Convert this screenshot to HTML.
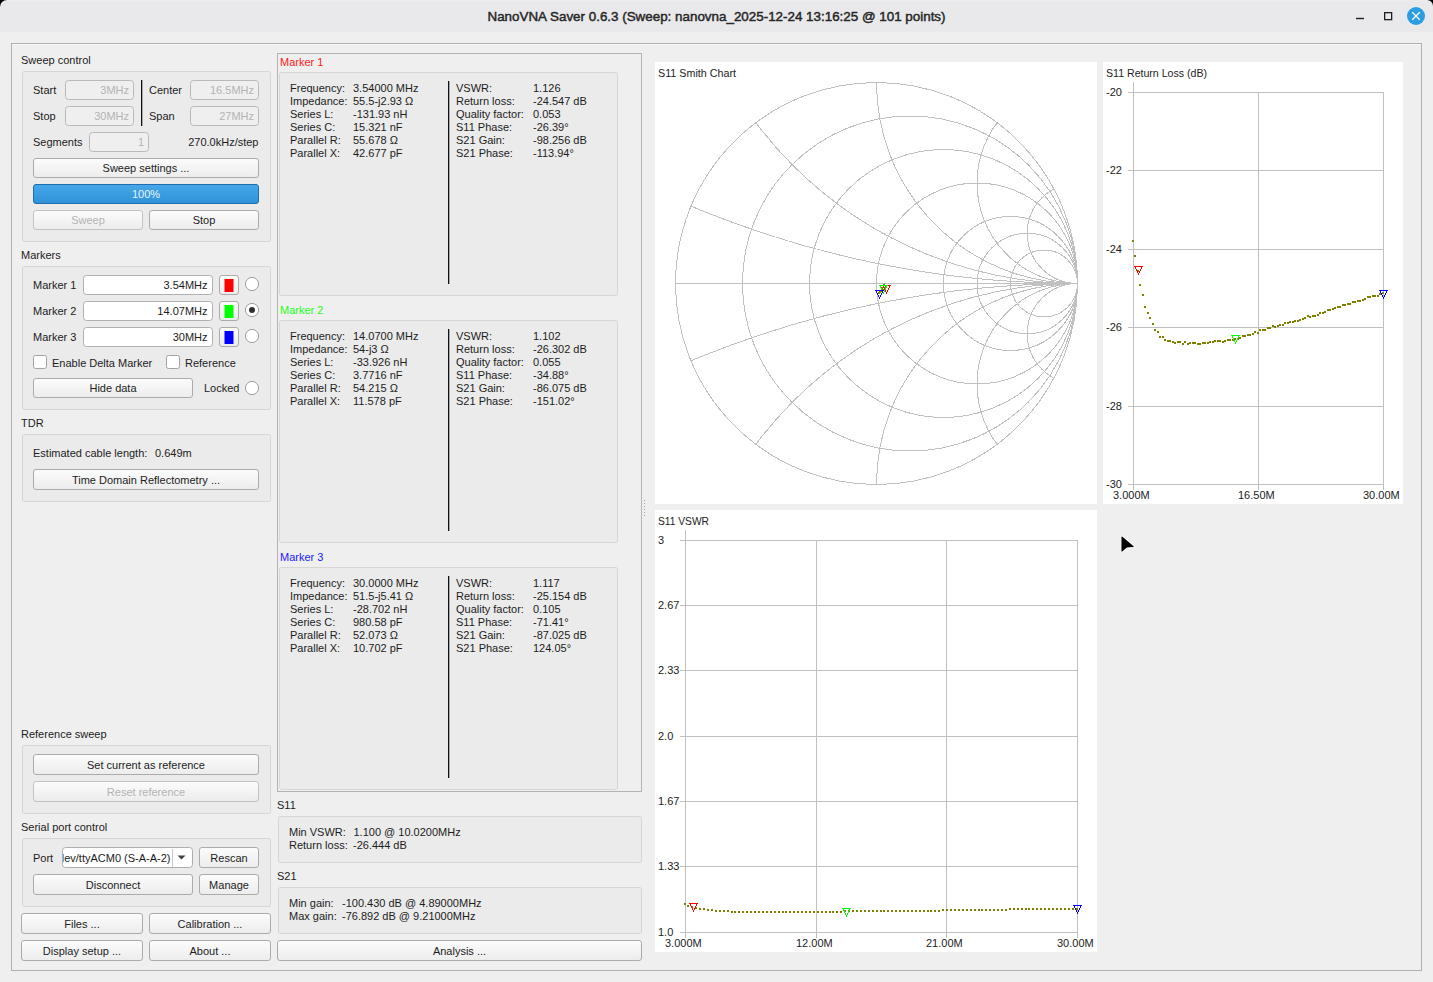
<!DOCTYPE html>
<html><head><meta charset="utf-8"><style>
html,body{margin:0;padding:0;background:#efefef;overflow:hidden;width:1433px;height:982px}
svg{display:block}
text{font-family:"Liberation Sans", sans-serif;white-space:pre}
</style></head><body>
<svg width="1433" height="982" viewBox="0 0 1433 982">
<defs>
<linearGradient id="btn" x1="0" y1="0" x2="0" y2="1"><stop offset="0" stop-color="#fcfcfc"/><stop offset="1" stop-color="#ececec"/></linearGradient>
<linearGradient id="prog" x1="0" y1="0" x2="0" y2="1"><stop offset="0" stop-color="#46a8ea"/><stop offset="1" stop-color="#2f92d8"/></linearGradient>
<clipPath id="smclip"><circle cx="876" cy="283" r="201"/></clipPath>
<clipPath id="cmbclip"><rect x="63" y="849" width="109" height="18"/></clipPath>
</defs>
<rect x="0" y="0" width="1433" height="982" rx="0" fill="#efefef" stroke="none" stroke-width="1"/>
<rect x="0" y="0" width="1433" height="32" rx="0" fill="#e9e9eb" stroke="none" stroke-width="1"/>
<path d="M0,0 L7,0 A7,7 0 0 0 0,7 Z" fill="#000"/>
<path d="M1433,0 L1427,0 A6,6 0 0 1 1433,6 Z" fill="#000"/>
<rect x="7" y="0" width="1420" height="1" rx="0" fill="#ededed" stroke="none" stroke-width="1"/>
<text x="716.5" y="21" font-size="13.4" fill="#262626" text-anchor="middle" font-weight="normal" stroke="#262626" stroke-width="0.45">NanoVNA Saver 0.6.3 (Sweep: nanovna_2025-12-24 13:16:25 @ 101 points)</text>
<rect x="1356" y="17.8" width="8" height="1.4" rx="0" fill="#1e1e1e" stroke="none" stroke-width="1"/>
<rect x="1384.65" y="12.65" width="7" height="7" rx="0" fill="none" stroke="#1e1e1e" stroke-width="1.3"/>
<circle cx="1416" cy="16" r="9" fill="#2a9ee0"/>
<path d="M1412.3,12.3 L1419.7,19.7 M1419.7,12.3 L1412.3,19.7" stroke="#fff" stroke-width="1.3"/>
<rect x="11.5" y="43.5" width="1410" height="927" rx="0" fill="none" stroke="#b0b0b0" stroke-width="1"/>
<line x1="12" y1="44.5" x2="1421" y2="44.5" stroke="#f7f7f7" stroke-width="1"/>
<text x="21" y="64" font-size="11" fill="#1c1c1c" text-anchor="start" font-weight="normal">Sweep control</text>
<rect x="22.5" y="71.5" width="248" height="170" rx="2" fill="#ebebeb" stroke="#d6d6d6" stroke-width="1"/>
<text x="33" y="94" font-size="11" fill="#1c1c1c" text-anchor="start" font-weight="normal">Start</text>
<rect x="65.5" y="80.5" width="68" height="19" rx="3" fill="#efefef" stroke="#b9b9b9" stroke-width="1"/>
<text x="129" y="94.0" font-size="11" fill="#b3b3b3" text-anchor="end" font-weight="normal">3MHz</text>
<text x="33" y="120" font-size="11" fill="#1c1c1c" text-anchor="start" font-weight="normal">Stop</text>
<rect x="65.5" y="106.5" width="68" height="19" rx="3" fill="#efefef" stroke="#b9b9b9" stroke-width="1"/>
<text x="129" y="120.0" font-size="11" fill="#b3b3b3" text-anchor="end" font-weight="normal">30MHz</text>
<rect x="141" y="80" width="1.3" height="46" rx="0" fill="#111" stroke="none" stroke-width="1"/>
<text x="149" y="94" font-size="11" fill="#1c1c1c" text-anchor="start" font-weight="normal">Center</text>
<rect x="190.5" y="80.5" width="68" height="19" rx="3" fill="#efefef" stroke="#b9b9b9" stroke-width="1"/>
<text x="254" y="94.0" font-size="11" fill="#b3b3b3" text-anchor="end" font-weight="normal">16.5MHz</text>
<text x="149" y="120" font-size="11" fill="#1c1c1c" text-anchor="start" font-weight="normal">Span</text>
<rect x="190.5" y="106.5" width="68" height="19" rx="3" fill="#efefef" stroke="#b9b9b9" stroke-width="1"/>
<text x="254" y="120.0" font-size="11" fill="#b3b3b3" text-anchor="end" font-weight="normal">27MHz</text>
<text x="33" y="146" font-size="11" fill="#1c1c1c" text-anchor="start" font-weight="normal">Segments</text>
<rect x="89.5" y="132.5" width="59" height="19" rx="3" fill="#efefef" stroke="#b9b9b9" stroke-width="1"/>
<text x="144" y="146.0" font-size="11" fill="#b3b3b3" text-anchor="end" font-weight="normal">1</text>
<text x="258.5" y="146" font-size="11" fill="#1c1c1c" text-anchor="end" font-weight="normal">270.0kHz/step</text>
<rect x="33.5" y="158.5" width="225" height="19" rx="2.5" fill="url(#btn)" stroke="#ababab" stroke-width="1"/>
<text x="146.0" y="172.0" font-size="11" fill="#1c1c1c" text-anchor="middle" font-weight="normal">Sweep settings ...</text>
<rect x="33.5" y="184.5" width="225" height="19" rx="2.5" fill="url(#prog)" stroke="#1f6fae" stroke-width="1"/>
<text x="146" y="198" font-size="11" fill="#e8f3fb" text-anchor="middle" font-weight="normal">100%</text>
<rect x="33.5" y="210.5" width="109" height="19" rx="2.5" fill="url(#btn)" stroke="#c2c2c2" stroke-width="1"/>
<text x="88.0" y="224.0" font-size="11" fill="#b3b3b3" text-anchor="middle" font-weight="normal">Sweep</text>
<rect x="149.5" y="210.5" width="109" height="19" rx="2.5" fill="url(#btn)" stroke="#ababab" stroke-width="1"/>
<text x="204.0" y="224.0" font-size="11" fill="#1c1c1c" text-anchor="middle" font-weight="normal">Stop</text>
<text x="21" y="259" font-size="11" fill="#1c1c1c" text-anchor="start" font-weight="normal">Markers</text>
<rect x="22.5" y="266.5" width="248" height="143" rx="2" fill="#ebebeb" stroke="#d6d6d6" stroke-width="1"/>
<text x="33" y="289" font-size="11" fill="#1c1c1c" text-anchor="start" font-weight="normal">Marker 1</text>
<rect x="83.5" y="275.5" width="129" height="19" rx="3" fill="#ffffff" stroke="#b0b0b0" stroke-width="1"/>
<text x="207.5" y="289.0" font-size="11" fill="#1c1c1c" text-anchor="end" font-weight="normal">3.54MHz</text>
<rect x="219.5" y="275.5" width="19" height="19" rx="2.5" fill="url(#btn)" stroke="#ababab" stroke-width="1"/>
<text x="229.0" y="289.0" font-size="11" fill="#1c1c1c" text-anchor="middle" font-weight="normal"></text>
<rect x="224.5" y="279" width="9" height="13" rx="0" fill="#ff0000" stroke="none" stroke-width="1"/>
<circle cx="252" cy="284" r="6.6" fill="#ffffff" stroke="#9f9f9f" stroke-width="1"/>
<text x="33" y="315" font-size="11" fill="#1c1c1c" text-anchor="start" font-weight="normal">Marker 2</text>
<rect x="83.5" y="301.5" width="129" height="19" rx="3" fill="#ffffff" stroke="#b0b0b0" stroke-width="1"/>
<text x="207.5" y="315.0" font-size="11" fill="#1c1c1c" text-anchor="end" font-weight="normal">14.07MHz</text>
<rect x="219.5" y="301.5" width="19" height="19" rx="2.5" fill="url(#btn)" stroke="#ababab" stroke-width="1"/>
<text x="229.0" y="315.0" font-size="11" fill="#1c1c1c" text-anchor="middle" font-weight="normal"></text>
<rect x="224.5" y="305" width="9" height="13" rx="0" fill="#00ff00" stroke="none" stroke-width="1"/>
<circle cx="252" cy="310" r="6.6" fill="#ffffff" stroke="#9f9f9f" stroke-width="1"/>
<circle cx="252" cy="310" r="3" fill="#303030"/>
<text x="33" y="341" font-size="11" fill="#1c1c1c" text-anchor="start" font-weight="normal">Marker 3</text>
<rect x="83.5" y="327.5" width="129" height="19" rx="3" fill="#ffffff" stroke="#b0b0b0" stroke-width="1"/>
<text x="207.5" y="341.0" font-size="11" fill="#1c1c1c" text-anchor="end" font-weight="normal">30MHz</text>
<rect x="219.5" y="327.5" width="19" height="19" rx="2.5" fill="url(#btn)" stroke="#ababab" stroke-width="1"/>
<text x="229.0" y="341.0" font-size="11" fill="#1c1c1c" text-anchor="middle" font-weight="normal"></text>
<rect x="224.5" y="331" width="9" height="13" rx="0" fill="#0000ff" stroke="none" stroke-width="1"/>
<circle cx="252" cy="336" r="6.6" fill="#ffffff" stroke="#9f9f9f" stroke-width="1"/>
<rect x="33.5" y="355.5" width="13" height="13" rx="2" fill="#ffffff" stroke="#a3a3a3" stroke-width="1"/>
<text x="52" y="367" font-size="11" fill="#1c1c1c" text-anchor="start" font-weight="normal">Enable Delta Marker</text>
<rect x="166.5" y="355.5" width="13" height="13" rx="2" fill="#ffffff" stroke="#a3a3a3" stroke-width="1"/>
<text x="185" y="367" font-size="11" fill="#1c1c1c" text-anchor="start" font-weight="normal">Reference</text>
<rect x="33.5" y="378.5" width="159" height="19" rx="2.5" fill="url(#btn)" stroke="#ababab" stroke-width="1"/>
<text x="113.0" y="392.0" font-size="11" fill="#1c1c1c" text-anchor="middle" font-weight="normal">Hide data</text>
<text x="204" y="392" font-size="11" fill="#1c1c1c" text-anchor="start" font-weight="normal">Locked</text>
<circle cx="252" cy="388" r="6.6" fill="#ffffff" stroke="#9f9f9f" stroke-width="1"/>
<text x="21" y="427" font-size="11" fill="#1c1c1c" text-anchor="start" font-weight="normal">TDR</text>
<rect x="22.5" y="434.5" width="248" height="67" rx="2" fill="#ebebeb" stroke="#d6d6d6" stroke-width="1"/>
<text x="33" y="457" font-size="11" fill="#1c1c1c" text-anchor="start" font-weight="normal">Estimated cable length:</text>
<text x="155" y="457" font-size="11" fill="#1c1c1c" text-anchor="start" font-weight="normal">0.649m</text>
<rect x="33.5" y="469.5" width="225" height="20" rx="2.5" fill="url(#btn)" stroke="#ababab" stroke-width="1"/>
<text x="146.0" y="483.5" font-size="11" fill="#1c1c1c" text-anchor="middle" font-weight="normal">Time Domain Reflectometry ...</text>
<text x="21" y="738" font-size="11" fill="#1c1c1c" text-anchor="start" font-weight="normal">Reference sweep</text>
<rect x="22.5" y="745.5" width="248" height="68" rx="2" fill="#ebebeb" stroke="#d6d6d6" stroke-width="1"/>
<rect x="33.5" y="754.5" width="225" height="20" rx="2.5" fill="url(#btn)" stroke="#ababab" stroke-width="1"/>
<text x="146.0" y="768.5" font-size="11" fill="#1c1c1c" text-anchor="middle" font-weight="normal">Set current as reference</text>
<rect x="33.5" y="781.5" width="225" height="20" rx="2.5" fill="url(#btn)" stroke="#c2c2c2" stroke-width="1"/>
<text x="146.0" y="795.5" font-size="11" fill="#b3b3b3" text-anchor="middle" font-weight="normal">Reset reference</text>
<text x="21" y="831" font-size="11" fill="#1c1c1c" text-anchor="start" font-weight="normal">Serial port control</text>
<rect x="22.5" y="838.5" width="248" height="68" rx="2" fill="#ebebeb" stroke="#d6d6d6" stroke-width="1"/>
<text x="33" y="862" font-size="11" fill="#1c1c1c" text-anchor="start" font-weight="normal">Port</text>
<rect x="62.5" y="847.5" width="130" height="20" rx="3" fill="#ffffff" stroke="#aeaeae" stroke-width="1"/>
<g clip-path="url(#cmbclip)">
<text x="55" y="862" font-size="11" fill="#1c1c1c" text-anchor="start" font-weight="normal">/dev/ttyACM0 (S-A-A-2)</text>
</g>
<line x1="172.5" y1="849" x2="172.5" y2="867" stroke="#c8c8c8" stroke-width="1"/>
<path d="M177.5,855.5 L185.5,855.5 L181.5,859.5 Z" fill="#404040"/>
<rect x="199.5" y="847.5" width="59" height="20" rx="2.5" fill="url(#btn)" stroke="#ababab" stroke-width="1"/>
<text x="229.0" y="861.5" font-size="11" fill="#1c1c1c" text-anchor="middle" font-weight="normal">Rescan</text>
<rect x="33.5" y="874.5" width="159" height="20" rx="2.5" fill="url(#btn)" stroke="#ababab" stroke-width="1"/>
<text x="113.0" y="888.5" font-size="11" fill="#1c1c1c" text-anchor="middle" font-weight="normal">Disconnect</text>
<rect x="199.5" y="874.5" width="59" height="20" rx="2.5" fill="url(#btn)" stroke="#ababab" stroke-width="1"/>
<text x="229.0" y="888.5" font-size="11" fill="#1c1c1c" text-anchor="middle" font-weight="normal">Manage</text>
<rect x="21.5" y="913.5" width="121" height="20" rx="2.5" fill="url(#btn)" stroke="#ababab" stroke-width="1"/>
<text x="82.0" y="927.5" font-size="11" fill="#1c1c1c" text-anchor="middle" font-weight="normal">Files ...</text>
<rect x="149.5" y="913.5" width="121" height="20" rx="2.5" fill="url(#btn)" stroke="#ababab" stroke-width="1"/>
<text x="210.0" y="927.5" font-size="11" fill="#1c1c1c" text-anchor="middle" font-weight="normal">Calibration ...</text>
<rect x="21.5" y="940.5" width="121" height="20" rx="2.5" fill="url(#btn)" stroke="#ababab" stroke-width="1"/>
<text x="82.0" y="954.5" font-size="11" fill="#1c1c1c" text-anchor="middle" font-weight="normal">Display setup ...</text>
<rect x="149.5" y="940.5" width="121" height="20" rx="2.5" fill="url(#btn)" stroke="#ababab" stroke-width="1"/>
<text x="210.0" y="954.5" font-size="11" fill="#1c1c1c" text-anchor="middle" font-weight="normal">About ...</text>
<rect x="277.5" y="53.5" width="364" height="738" rx="0" fill="none" stroke="#b3b3b3" stroke-width="1"/>
<text x="280" y="66" font-size="11" fill="#ff1a1a" text-anchor="start" font-weight="normal">Marker 1</text>
<rect x="279.5" y="72.5" width="338" height="223" rx="2" fill="#ebebeb" stroke="#d6d6d6" stroke-width="1"/>
<rect x="448" y="81" width="1.3" height="203" rx="0" fill="#111" stroke="none" stroke-width="1"/>
<text x="290" y="92" font-size="11" fill="#1c1c1c" text-anchor="start" font-weight="normal">Frequency:</text>
<text x="353" y="92" font-size="11" fill="#1c1c1c" text-anchor="start" font-weight="normal">3.54000 MHz</text>
<text x="456" y="92" font-size="11" fill="#1c1c1c" text-anchor="start" font-weight="normal">VSWR:</text>
<text x="533" y="92" font-size="11" fill="#1c1c1c" text-anchor="start" font-weight="normal">1.126</text>
<text x="290" y="105" font-size="11" fill="#1c1c1c" text-anchor="start" font-weight="normal">Impedance:</text>
<text x="353" y="105" font-size="11" fill="#1c1c1c" text-anchor="start" font-weight="normal">55.5-j2.93 Ω</text>
<text x="456" y="105" font-size="11" fill="#1c1c1c" text-anchor="start" font-weight="normal">Return loss:</text>
<text x="533" y="105" font-size="11" fill="#1c1c1c" text-anchor="start" font-weight="normal">-24.547 dB</text>
<text x="290" y="118" font-size="11" fill="#1c1c1c" text-anchor="start" font-weight="normal">Series L:</text>
<text x="353" y="118" font-size="11" fill="#1c1c1c" text-anchor="start" font-weight="normal">-131.93 nH</text>
<text x="456" y="118" font-size="11" fill="#1c1c1c" text-anchor="start" font-weight="normal">Quality factor:</text>
<text x="533" y="118" font-size="11" fill="#1c1c1c" text-anchor="start" font-weight="normal">0.053</text>
<text x="290" y="131" font-size="11" fill="#1c1c1c" text-anchor="start" font-weight="normal">Series C:</text>
<text x="353" y="131" font-size="11" fill="#1c1c1c" text-anchor="start" font-weight="normal">15.321 nF</text>
<text x="456" y="131" font-size="11" fill="#1c1c1c" text-anchor="start" font-weight="normal">S11 Phase:</text>
<text x="533" y="131" font-size="11" fill="#1c1c1c" text-anchor="start" font-weight="normal">-26.39°</text>
<text x="290" y="144" font-size="11" fill="#1c1c1c" text-anchor="start" font-weight="normal">Parallel R:</text>
<text x="353" y="144" font-size="11" fill="#1c1c1c" text-anchor="start" font-weight="normal">55.678 Ω</text>
<text x="456" y="144" font-size="11" fill="#1c1c1c" text-anchor="start" font-weight="normal">S21 Gain:</text>
<text x="533" y="144" font-size="11" fill="#1c1c1c" text-anchor="start" font-weight="normal">-98.256 dB</text>
<text x="290" y="157" font-size="11" fill="#1c1c1c" text-anchor="start" font-weight="normal">Parallel X:</text>
<text x="353" y="157" font-size="11" fill="#1c1c1c" text-anchor="start" font-weight="normal">42.677 pF</text>
<text x="456" y="157" font-size="11" fill="#1c1c1c" text-anchor="start" font-weight="normal">S21 Phase:</text>
<text x="533" y="157" font-size="11" fill="#1c1c1c" text-anchor="start" font-weight="normal">-113.94°</text>
<text x="280" y="314" font-size="11" fill="#1aff1a" text-anchor="start" font-weight="normal">Marker 2</text>
<rect x="279.5" y="320.5" width="338" height="222" rx="2" fill="#ebebeb" stroke="#d6d6d6" stroke-width="1"/>
<rect x="448" y="329" width="1.3" height="202" rx="0" fill="#111" stroke="none" stroke-width="1"/>
<text x="290" y="340" font-size="11" fill="#1c1c1c" text-anchor="start" font-weight="normal">Frequency:</text>
<text x="353" y="340" font-size="11" fill="#1c1c1c" text-anchor="start" font-weight="normal">14.0700 MHz</text>
<text x="456" y="340" font-size="11" fill="#1c1c1c" text-anchor="start" font-weight="normal">VSWR:</text>
<text x="533" y="340" font-size="11" fill="#1c1c1c" text-anchor="start" font-weight="normal">1.102</text>
<text x="290" y="353" font-size="11" fill="#1c1c1c" text-anchor="start" font-weight="normal">Impedance:</text>
<text x="353" y="353" font-size="11" fill="#1c1c1c" text-anchor="start" font-weight="normal">54-j3 Ω</text>
<text x="456" y="353" font-size="11" fill="#1c1c1c" text-anchor="start" font-weight="normal">Return loss:</text>
<text x="533" y="353" font-size="11" fill="#1c1c1c" text-anchor="start" font-weight="normal">-26.302 dB</text>
<text x="290" y="366" font-size="11" fill="#1c1c1c" text-anchor="start" font-weight="normal">Series L:</text>
<text x="353" y="366" font-size="11" fill="#1c1c1c" text-anchor="start" font-weight="normal">-33.926 nH</text>
<text x="456" y="366" font-size="11" fill="#1c1c1c" text-anchor="start" font-weight="normal">Quality factor:</text>
<text x="533" y="366" font-size="11" fill="#1c1c1c" text-anchor="start" font-weight="normal">0.055</text>
<text x="290" y="379" font-size="11" fill="#1c1c1c" text-anchor="start" font-weight="normal">Series C:</text>
<text x="353" y="379" font-size="11" fill="#1c1c1c" text-anchor="start" font-weight="normal">3.7716 nF</text>
<text x="456" y="379" font-size="11" fill="#1c1c1c" text-anchor="start" font-weight="normal">S11 Phase:</text>
<text x="533" y="379" font-size="11" fill="#1c1c1c" text-anchor="start" font-weight="normal">-34.88°</text>
<text x="290" y="392" font-size="11" fill="#1c1c1c" text-anchor="start" font-weight="normal">Parallel R:</text>
<text x="353" y="392" font-size="11" fill="#1c1c1c" text-anchor="start" font-weight="normal">54.215 Ω</text>
<text x="456" y="392" font-size="11" fill="#1c1c1c" text-anchor="start" font-weight="normal">S21 Gain:</text>
<text x="533" y="392" font-size="11" fill="#1c1c1c" text-anchor="start" font-weight="normal">-86.075 dB</text>
<text x="290" y="405" font-size="11" fill="#1c1c1c" text-anchor="start" font-weight="normal">Parallel X:</text>
<text x="353" y="405" font-size="11" fill="#1c1c1c" text-anchor="start" font-weight="normal">11.578 pF</text>
<text x="456" y="405" font-size="11" fill="#1c1c1c" text-anchor="start" font-weight="normal">S21 Phase:</text>
<text x="533" y="405" font-size="11" fill="#1c1c1c" text-anchor="start" font-weight="normal">-151.02°</text>
<text x="280" y="561" font-size="11" fill="#1a1aff" text-anchor="start" font-weight="normal">Marker 3</text>
<rect x="279.5" y="567.5" width="338" height="222" rx="2" fill="#ebebeb" stroke="#d6d6d6" stroke-width="1"/>
<rect x="448" y="576" width="1.3" height="202" rx="0" fill="#111" stroke="none" stroke-width="1"/>
<text x="290" y="587" font-size="11" fill="#1c1c1c" text-anchor="start" font-weight="normal">Frequency:</text>
<text x="353" y="587" font-size="11" fill="#1c1c1c" text-anchor="start" font-weight="normal">30.0000 MHz</text>
<text x="456" y="587" font-size="11" fill="#1c1c1c" text-anchor="start" font-weight="normal">VSWR:</text>
<text x="533" y="587" font-size="11" fill="#1c1c1c" text-anchor="start" font-weight="normal">1.117</text>
<text x="290" y="600" font-size="11" fill="#1c1c1c" text-anchor="start" font-weight="normal">Impedance:</text>
<text x="353" y="600" font-size="11" fill="#1c1c1c" text-anchor="start" font-weight="normal">51.5-j5.41 Ω</text>
<text x="456" y="600" font-size="11" fill="#1c1c1c" text-anchor="start" font-weight="normal">Return loss:</text>
<text x="533" y="600" font-size="11" fill="#1c1c1c" text-anchor="start" font-weight="normal">-25.154 dB</text>
<text x="290" y="613" font-size="11" fill="#1c1c1c" text-anchor="start" font-weight="normal">Series L:</text>
<text x="353" y="613" font-size="11" fill="#1c1c1c" text-anchor="start" font-weight="normal">-28.702 nH</text>
<text x="456" y="613" font-size="11" fill="#1c1c1c" text-anchor="start" font-weight="normal">Quality factor:</text>
<text x="533" y="613" font-size="11" fill="#1c1c1c" text-anchor="start" font-weight="normal">0.105</text>
<text x="290" y="626" font-size="11" fill="#1c1c1c" text-anchor="start" font-weight="normal">Series C:</text>
<text x="353" y="626" font-size="11" fill="#1c1c1c" text-anchor="start" font-weight="normal">980.58 pF</text>
<text x="456" y="626" font-size="11" fill="#1c1c1c" text-anchor="start" font-weight="normal">S11 Phase:</text>
<text x="533" y="626" font-size="11" fill="#1c1c1c" text-anchor="start" font-weight="normal">-71.41°</text>
<text x="290" y="639" font-size="11" fill="#1c1c1c" text-anchor="start" font-weight="normal">Parallel R:</text>
<text x="353" y="639" font-size="11" fill="#1c1c1c" text-anchor="start" font-weight="normal">52.073 Ω</text>
<text x="456" y="639" font-size="11" fill="#1c1c1c" text-anchor="start" font-weight="normal">S21 Gain:</text>
<text x="533" y="639" font-size="11" fill="#1c1c1c" text-anchor="start" font-weight="normal">-87.025 dB</text>
<text x="290" y="652" font-size="11" fill="#1c1c1c" text-anchor="start" font-weight="normal">Parallel X:</text>
<text x="353" y="652" font-size="11" fill="#1c1c1c" text-anchor="start" font-weight="normal">10.702 pF</text>
<text x="456" y="652" font-size="11" fill="#1c1c1c" text-anchor="start" font-weight="normal">S21 Phase:</text>
<text x="533" y="652" font-size="11" fill="#1c1c1c" text-anchor="start" font-weight="normal">124.05°</text>
<text x="277" y="809" font-size="11" fill="#1c1c1c" text-anchor="start" font-weight="normal">S11</text>
<rect x="278.5" y="816.5" width="363" height="46" rx="2" fill="#ebebeb" stroke="#d6d6d6" stroke-width="1"/>
<text x="289" y="836" font-size="11" fill="#1c1c1c" text-anchor="start" font-weight="normal">Min VSWR:</text>
<text x="353.5" y="836" font-size="11" fill="#1c1c1c" text-anchor="start" font-weight="normal">1.100 @ 10.0200MHz</text>
<text x="289" y="849" font-size="11" fill="#1c1c1c" text-anchor="start" font-weight="normal">Return loss:</text>
<text x="353" y="849" font-size="11" fill="#1c1c1c" text-anchor="start" font-weight="normal">-26.444 dB</text>
<text x="277" y="880" font-size="11" fill="#1c1c1c" text-anchor="start" font-weight="normal">S21</text>
<rect x="278.5" y="887.5" width="363" height="46" rx="2" fill="#ebebeb" stroke="#d6d6d6" stroke-width="1"/>
<text x="289" y="907" font-size="11" fill="#1c1c1c" text-anchor="start" font-weight="normal">Min gain:</text>
<text x="342" y="907" font-size="11" fill="#1c1c1c" text-anchor="start" font-weight="normal">-100.430 dB @ 4.89000MHz</text>
<text x="289" y="920" font-size="11" fill="#1c1c1c" text-anchor="start" font-weight="normal">Max gain:</text>
<text x="342" y="920" font-size="11" fill="#1c1c1c" text-anchor="start" font-weight="normal">-76.892 dB @ 9.21000MHz</text>
<rect x="277.5" y="940.5" width="364" height="20" rx="2.5" fill="url(#btn)" stroke="#ababab" stroke-width="1"/>
<text x="459.5" y="954.5" font-size="11" fill="#1c1c1c" text-anchor="middle" font-weight="normal">Analysis ...</text>
<rect x="644" y="500" width="1" height="1" rx="0" fill="#a0a0a0" stroke="none" stroke-width="1"/>
<rect x="644" y="503" width="1" height="1" rx="0" fill="#a0a0a0" stroke="none" stroke-width="1"/>
<rect x="644" y="506" width="1" height="1" rx="0" fill="#a0a0a0" stroke="none" stroke-width="1"/>
<rect x="644" y="509" width="1" height="1" rx="0" fill="#a0a0a0" stroke="none" stroke-width="1"/>
<rect x="644" y="512" width="1" height="1" rx="0" fill="#a0a0a0" stroke="none" stroke-width="1"/>
<rect x="644" y="515" width="1" height="1" rx="0" fill="#a0a0a0" stroke="none" stroke-width="1"/>
<rect x="655" y="62" width="442" height="442" rx="0" fill="#ffffff" stroke="none" stroke-width="1"/>
<text x="658" y="77" font-size="11" fill="#1c1c1c" text-anchor="start" font-weight="normal" textLength="78" lengthAdjust="spacingAndGlyphs">S11 Smith Chart</text>
<g stroke="#c0c0c0" stroke-width="1" fill="none" shape-rendering="crispEdges"><circle cx="876.5" cy="283.5" r="201"/><line x1="675.5" y1="283.5" x2="1077.5" y2="283.5"/><circle cx="910.0" cy="283.5" r="167.5"/><circle cx="943.5" cy="283.5" r="134.0"/><circle cx="977.0" cy="283.5" r="100.5"/><circle cx="1010.5" cy="283.5" r="67.0"/><circle cx="1027.25" cy="283.5" r="50.25"/><circle cx="1044.0" cy="283.5" r="33.5"/><g clip-path="url(#smclip)"><circle cx="1077.5" cy="-721.5" r="1005.0"/><circle cx="1077.5" cy="1288.5" r="1005.0"/><circle cx="1077.5" cy="-118.5" r="402.0"/><circle cx="1077.5" cy="685.5" r="402.0"/><circle cx="1077.5" cy="82.5" r="201.0"/><circle cx="1077.5" cy="484.5" r="201.0"/><circle cx="1077.5" cy="183.0" r="100.5"/><circle cx="1077.5" cy="384.0" r="100.5"/><circle cx="1077.5" cy="233.25" r="50.25"/><circle cx="1077.5" cy="333.75" r="50.25"/></g></g>
<path d="M883,284h2v2h-2zM884,287h2v2h-2zM882,289h2v2h-2zM879,291h2v2h-2zM878,292h2v2h-2zM881,287h2v2h-2zM885,286h2v2h-2zM880,290h2v2h-2z" fill="#808000" shape-rendering="crispEdges"/>
<path d="M882,285h9v1h-9zM883,286h1v1h-1zM889,286h1v1h-1zM883,287h1v1h-1zM889,287h1v1h-1zM884,288h1v1h-1zM888,288h1v1h-1zM884,289h1v1h-1zM888,289h1v1h-1zM885,290h1v1h-1zM887,290h1v1h-1zM885,291h1v1h-1zM887,291h1v1h-1zM886,292h1v1h-1zM886,293h1v1h-1z" fill="#ff0000" shape-rendering="crispEdges"/>
<path d="M879,285h9v1h-9zM880,286h1v1h-1zM886,286h1v1h-1zM880,287h1v1h-1zM886,287h1v1h-1zM881,288h1v1h-1zM885,288h1v1h-1zM881,289h1v1h-1zM885,289h1v1h-1zM882,290h1v1h-1zM884,290h1v1h-1zM882,291h1v1h-1zM884,291h1v1h-1zM883,292h1v1h-1zM883,293h1v1h-1z" fill="#00ff00" shape-rendering="crispEdges"/>
<path d="M875,290h9v1h-9zM876,291h1v1h-1zM882,291h1v1h-1zM876,292h1v1h-1zM882,292h1v1h-1zM877,293h1v1h-1zM881,293h1v1h-1zM877,294h1v1h-1zM881,294h1v1h-1zM878,295h1v1h-1zM880,295h1v1h-1zM878,296h1v1h-1zM880,296h1v1h-1zM879,297h1v1h-1zM879,298h1v1h-1z" fill="#0000ff" shape-rendering="crispEdges"/>
<rect x="1103" y="62" width="300" height="442" rx="0" fill="#ffffff" stroke="none" stroke-width="1"/>
<text x="1106" y="77" font-size="11" fill="#1c1c1c" text-anchor="start" font-weight="normal" textLength="101" lengthAdjust="spacingAndGlyphs">S11 Return Loss (dB)</text>
<text x="1106" y="96" font-size="11" fill="#1c1c1c" text-anchor="start" font-weight="normal">-20</text>
<text x="1106" y="174" font-size="11" fill="#1c1c1c" text-anchor="start" font-weight="normal">-22</text>
<text x="1106" y="253" font-size="11" fill="#1c1c1c" text-anchor="start" font-weight="normal">-24</text>
<text x="1106" y="331" font-size="11" fill="#1c1c1c" text-anchor="start" font-weight="normal">-26</text>
<text x="1106" y="410" font-size="11" fill="#1c1c1c" text-anchor="start" font-weight="normal">-28</text>
<text x="1106" y="488" font-size="11" fill="#1c1c1c" text-anchor="start" font-weight="normal">-30</text>
<g stroke="#c0c0c0" stroke-width="1" shape-rendering="crispEdges"><line x1="1133.5" y1="82" x2="1133.5" y2="490"/><line x1="1128" y1="92.5" x2="1384" y2="92.5"/><line x1="1128" y1="170.5" x2="1384" y2="170.5"/><line x1="1128" y1="249.5" x2="1384" y2="249.5"/><line x1="1128" y1="327.5" x2="1384" y2="327.5"/><line x1="1128" y1="406.5" x2="1384" y2="406.5"/><line x1="1128" y1="484.5" x2="1384" y2="484.5"/><line x1="1258.5" y1="92" x2="1258.5" y2="490"/><line x1="1383.5" y1="92" x2="1383.5" y2="490"/></g>
<text x="1113" y="499" font-size="11" fill="#1c1c1c" text-anchor="start" font-weight="normal">3.000M</text>
<text x="1238" y="499" font-size="11" fill="#1c1c1c" text-anchor="start" font-weight="normal">16.50M</text>
<text x="1363" y="499" font-size="11" fill="#1c1c1c" text-anchor="start" font-weight="normal">30.00M</text>
<path d="M1132,240h2v2h-2zM1134,255h2v2h-2zM1137,270h2v2h-2zM1139,284h2v2h-2zM1142,294h2v2h-2zM1144,306h2v2h-2zM1147,312h2v2h-2zM1149,317h2v2h-2zM1152,323h2v2h-2zM1154,329h2v2h-2zM1157,331h2v2h-2zM1159,336h2v2h-2zM1162,336h2v2h-2zM1164,339h2v2h-2zM1167,340h2v2h-2zM1169,340h2v2h-2zM1172,341h2v2h-2zM1174,342h2v2h-2zM1177,341h2v2h-2zM1179,341h2v2h-2zM1182,343h2v2h-2zM1184,341h2v2h-2zM1187,343h2v2h-2zM1189,342h2v2h-2zM1192,342h2v2h-2zM1194,342h2v2h-2zM1197,343h2v2h-2zM1199,343h2v2h-2zM1202,342h2v2h-2zM1204,342h2v2h-2zM1207,342h2v2h-2zM1209,341h2v2h-2zM1212,341h2v2h-2zM1214,340h2v2h-2zM1217,340h2v2h-2zM1219,340h2v2h-2zM1222,341h2v2h-2zM1224,340h2v2h-2zM1227,339h2v2h-2zM1229,339h2v2h-2zM1232,339h2v2h-2zM1234,338h2v2h-2zM1237,338h2v2h-2zM1239,337h2v2h-2zM1242,335h2v2h-2zM1244,335h2v2h-2zM1247,334h2v2h-2zM1249,334h2v2h-2zM1252,333h2v2h-2zM1254,331h2v2h-2zM1257,332h2v2h-2zM1259,329h2v2h-2zM1262,329h2v2h-2zM1264,329h2v2h-2zM1267,327h2v2h-2zM1269,327h2v2h-2zM1272,325h2v2h-2zM1274,326h2v2h-2zM1277,325h2v2h-2zM1279,324h2v2h-2zM1282,324h2v2h-2zM1284,322h2v2h-2zM1287,322h2v2h-2zM1289,321h2v2h-2zM1292,321h2v2h-2zM1294,320h2v2h-2zM1297,320h2v2h-2zM1299,319h2v2h-2zM1302,318h2v2h-2zM1304,317h2v2h-2zM1307,315h2v2h-2zM1309,316h2v2h-2zM1312,315h2v2h-2zM1314,315h2v2h-2zM1317,314h2v2h-2zM1319,312h2v2h-2zM1322,312h2v2h-2zM1324,311h2v2h-2zM1327,309h2v2h-2zM1329,309h2v2h-2zM1332,308h2v2h-2zM1334,307h2v2h-2zM1337,306h2v2h-2zM1339,306h2v2h-2zM1342,304h2v2h-2zM1344,304h2v2h-2zM1347,303h2v2h-2zM1349,303h2v2h-2zM1352,301h2v2h-2zM1354,301h2v2h-2zM1357,300h2v2h-2zM1359,300h2v2h-2zM1362,299h2v2h-2zM1364,298h2v2h-2zM1367,296h2v2h-2zM1369,296h2v2h-2zM1372,295h2v2h-2zM1374,295h2v2h-2zM1377,295h2v2h-2zM1379,293h2v2h-2zM1382,292h2v2h-2z" fill="#808000" shape-rendering="crispEdges"/>
<path d="M1134,266h9v1h-9zM1135,267h1v1h-1zM1141,267h1v1h-1zM1135,268h1v1h-1zM1141,268h1v1h-1zM1136,269h1v1h-1zM1140,269h1v1h-1zM1136,270h1v1h-1zM1140,270h1v1h-1zM1137,271h1v1h-1zM1139,271h1v1h-1zM1137,272h1v1h-1zM1139,272h1v1h-1zM1138,273h1v1h-1zM1138,274h1v1h-1z" fill="#ff0000" shape-rendering="crispEdges"/>
<path d="M1231,335h9v1h-9zM1232,336h1v1h-1zM1238,336h1v1h-1zM1232,337h1v1h-1zM1238,337h1v1h-1zM1233,338h1v1h-1zM1237,338h1v1h-1zM1233,339h1v1h-1zM1237,339h1v1h-1zM1234,340h1v1h-1zM1236,340h1v1h-1zM1234,341h1v1h-1zM1236,341h1v1h-1zM1235,342h1v1h-1zM1235,343h1v1h-1z" fill="#00ff00" shape-rendering="crispEdges"/>
<path d="M1379,290h9v1h-9zM1380,291h1v1h-1zM1386,291h1v1h-1zM1380,292h1v1h-1zM1386,292h1v1h-1zM1381,293h1v1h-1zM1385,293h1v1h-1zM1381,294h1v1h-1zM1385,294h1v1h-1zM1382,295h1v1h-1zM1384,295h1v1h-1zM1382,296h1v1h-1zM1384,296h1v1h-1zM1383,297h1v1h-1zM1383,298h1v1h-1z" fill="#0000ff" shape-rendering="crispEdges"/>
<rect x="655" y="510" width="442" height="442" rx="0" fill="#ffffff" stroke="none" stroke-width="1"/>
<text x="658" y="525" font-size="11" fill="#1c1c1c" text-anchor="start" font-weight="normal" textLength="51" lengthAdjust="spacingAndGlyphs">S11 VSWR</text>
<text x="658" y="543.5" font-size="11" fill="#1c1c1c" text-anchor="start" font-weight="normal">3</text>
<text x="658" y="608.5" font-size="11" fill="#1c1c1c" text-anchor="start" font-weight="normal">2.67</text>
<text x="658" y="673.5" font-size="11" fill="#1c1c1c" text-anchor="start" font-weight="normal">2.33</text>
<text x="658" y="739.5" font-size="11" fill="#1c1c1c" text-anchor="start" font-weight="normal">2.0</text>
<text x="658" y="804.5" font-size="11" fill="#1c1c1c" text-anchor="start" font-weight="normal">1.67</text>
<text x="658" y="869.5" font-size="11" fill="#1c1c1c" text-anchor="start" font-weight="normal">1.33</text>
<text x="658" y="935.5" font-size="11" fill="#1c1c1c" text-anchor="start" font-weight="normal">1.0</text>
<g stroke="#c0c0c0" stroke-width="1" shape-rendering="crispEdges"><line x1="685.5" y1="530" x2="685.5" y2="938"/><line x1="680" y1="540.5" x2="1078" y2="540.5"/><line x1="680" y1="605.5" x2="1078" y2="605.5"/><line x1="680" y1="670.5" x2="1078" y2="670.5"/><line x1="680" y1="736.5" x2="1078" y2="736.5"/><line x1="680" y1="801.5" x2="1078" y2="801.5"/><line x1="680" y1="866.5" x2="1078" y2="866.5"/><line x1="680" y1="932.5" x2="1078" y2="932.5"/><line x1="816.5" y1="540" x2="816.5" y2="938"/><line x1="946.5" y1="540" x2="946.5" y2="938"/><line x1="1077.5" y1="540" x2="1077.5" y2="938"/></g>
<text x="665" y="947" font-size="11" fill="#1c1c1c" text-anchor="start" font-weight="normal">3.000M</text>
<text x="796" y="947" font-size="11" fill="#1c1c1c" text-anchor="start" font-weight="normal">12.00M</text>
<text x="926" y="947" font-size="11" fill="#1c1c1c" text-anchor="start" font-weight="normal">21.00M</text>
<text x="1057" y="947" font-size="11" fill="#1c1c1c" text-anchor="start" font-weight="normal">30.00M</text>
<path d="M684,903h2v2h-2zM687,905h2v2h-2zM691,906h2v2h-2zM695,907h2v2h-2zM699,908h2v2h-2zM703,908h2v2h-2zM707,909h2v2h-2zM711,909h2v2h-2zM715,910h2v2h-2zM719,910h2v2h-2zM723,910h2v2h-2zM727,910h2v2h-2zM731,911h2v2h-2zM734,911h2v2h-2zM738,911h2v2h-2zM742,911h2v2h-2zM746,911h2v2h-2zM750,911h2v2h-2zM754,911h2v2h-2zM758,911h2v2h-2zM762,911h2v2h-2zM766,911h2v2h-2zM770,911h2v2h-2zM774,911h2v2h-2zM778,911h2v2h-2zM782,911h2v2h-2zM785,911h2v2h-2zM789,911h2v2h-2zM793,911h2v2h-2zM797,911h2v2h-2zM801,911h2v2h-2zM805,911h2v2h-2zM809,911h2v2h-2zM813,911h2v2h-2zM817,911h2v2h-2zM821,911h2v2h-2zM825,911h2v2h-2zM829,911h2v2h-2zM832,911h2v2h-2zM836,911h2v2h-2zM840,911h2v2h-2zM844,910h2v2h-2zM848,910h2v2h-2zM852,910h2v2h-2zM856,910h2v2h-2zM860,910h2v2h-2zM864,910h2v2h-2zM868,910h2v2h-2zM872,910h2v2h-2zM876,910h2v2h-2zM880,910h2v2h-2zM883,910h2v2h-2zM887,910h2v2h-2zM891,910h2v2h-2zM895,910h2v2h-2zM899,910h2v2h-2zM903,910h2v2h-2zM907,910h2v2h-2zM911,910h2v2h-2zM915,910h2v2h-2zM919,910h2v2h-2zM923,910h2v2h-2zM927,910h2v2h-2zM930,910h2v2h-2zM934,910h2v2h-2zM938,910h2v2h-2zM942,909h2v2h-2zM946,909h2v2h-2zM950,909h2v2h-2zM954,909h2v2h-2zM958,909h2v2h-2zM962,909h2v2h-2zM966,909h2v2h-2zM970,909h2v2h-2zM974,909h2v2h-2zM978,909h2v2h-2zM981,909h2v2h-2zM985,909h2v2h-2zM989,909h2v2h-2zM993,909h2v2h-2zM997,909h2v2h-2zM1001,909h2v2h-2zM1005,909h2v2h-2zM1009,908h2v2h-2zM1013,908h2v2h-2zM1017,908h2v2h-2zM1021,908h2v2h-2zM1025,908h2v2h-2zM1028,908h2v2h-2zM1032,908h2v2h-2zM1036,908h2v2h-2zM1040,908h2v2h-2zM1044,908h2v2h-2zM1048,908h2v2h-2zM1052,908h2v2h-2zM1056,908h2v2h-2zM1060,908h2v2h-2zM1064,908h2v2h-2zM1068,908h2v2h-2zM1072,908h2v2h-2zM1076,908h2v2h-2z" fill="#808000" shape-rendering="crispEdges"/>
<path d="M689,903h9v1h-9zM690,904h1v1h-1zM696,904h1v1h-1zM690,905h1v1h-1zM696,905h1v1h-1zM691,906h1v1h-1zM695,906h1v1h-1zM691,907h1v1h-1zM695,907h1v1h-1zM692,908h1v1h-1zM694,908h1v1h-1zM692,909h1v1h-1zM694,909h1v1h-1zM693,910h1v1h-1zM693,911h1v1h-1z" fill="#ff0000" shape-rendering="crispEdges"/>
<path d="M842,908h9v1h-9zM843,909h1v1h-1zM849,909h1v1h-1zM843,910h1v1h-1zM849,910h1v1h-1zM844,911h1v1h-1zM848,911h1v1h-1zM844,912h1v1h-1zM848,912h1v1h-1zM845,913h1v1h-1zM847,913h1v1h-1zM845,914h1v1h-1zM847,914h1v1h-1zM846,915h1v1h-1zM846,916h1v1h-1z" fill="#00ff00" shape-rendering="crispEdges"/>
<path d="M1073,905h9v1h-9zM1074,906h1v1h-1zM1080,906h1v1h-1zM1074,907h1v1h-1zM1080,907h1v1h-1zM1075,908h1v1h-1zM1079,908h1v1h-1zM1075,909h1v1h-1zM1079,909h1v1h-1zM1076,910h1v1h-1zM1078,910h1v1h-1zM1076,911h1v1h-1zM1078,911h1v1h-1zM1077,912h1v1h-1zM1077,913h1v1h-1z" fill="#0000ff" shape-rendering="crispEdges"/>
<path d="M1122.2,535.9 Q1120.9,535.6 1120.9,537.2 L1120.9,551.2 Q1121.3,553 1122.9,551.7 L1127.3,548 L1132.9,547.6 Q1135,547.2 1133.7,545.5 Z" fill="#000" stroke="#fff" stroke-width="1.1" stroke-linejoin="round"/>
</svg>
</body></html>
